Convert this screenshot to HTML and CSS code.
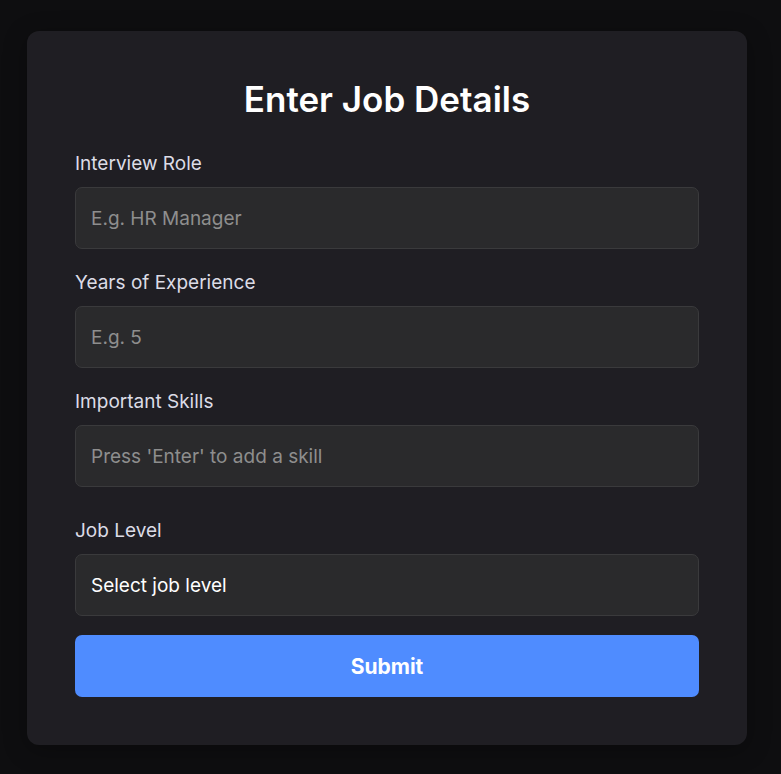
FILE: index.html
```html
<!DOCTYPE html>
<html lang="en">
<head>
<meta charset="utf-8">
<meta name="viewport" content="width=device-width, initial-scale=1">
<title>Enter Job Details</title>
<link rel="stylesheet" href="styles.css">
</head>
<body>
<main class="page">
  <form class="card">
    <h1 class="title">Enter Job Details</h1>
    <div class="field">
      <label for="role">Interview Role</label>
      <input class="control" id="role" type="text" placeholder="E.g. HR Manager">
    </div>
    <div class="field">
      <label for="years">Years of Experience</label>
      <input class="control" id="years" type="text" inputmode="numeric" placeholder="E.g. 5">
    </div>
    <div class="field field-skills">
      <label for="skills">Important Skills</label>
      <input class="control" id="skills" type="text" placeholder="Press 'Enter' to add a skill">
    </div>
    <div class="field">
      <label for="level">Job Level</label>
      <select class="control" id="level">
        <option value="">Select job level</option>
        <option>Junior</option>
        <option>Senior</option>
      </select>
    </div>
    <button class="submit" type="submit">Submit</button>
  </form>
</main>
</body>
</html>
```

FILE: styles.css
```css
* {
  box-sizing: border-box;
}

body {
  margin: 0;
  min-height: 100vh;
  background: #0e0e10;
  color: #fff;
  font-family: Inter, sans-serif;
}

.page {
  padding: 31px 34px 29px 27px;
}

.card {
  max-width: 720px;
  margin: 0 auto;
  padding: 48px;
  border-radius: 12px;
  background: #1f1e23;
  box-shadow: 0 5px 24px rgba(0, 0, 0, 0.3);
}

.title {
  margin: 0 0 30px;
  font-size: 35px;
  font-weight: 600;
  line-height: 40px;
  text-align: center;
}

.field {
  margin-bottom: 19px;
}

.field-skills {
  margin-bottom: 29px;
}

label {
  display: block;
  margin-bottom: 8px;
  color: #dcdce6;
  font-size: 19px;
  line-height: 30px;
}

.control {
  display: block;
  width: 100%;
  height: 62px;
  padding: 0 15px;
  border: 1px solid #3a3a3c;
  border-radius: 7px;
  outline: none;
  appearance: none;
  background: #2a2a2c;
  color: #fff;
  font: 400 19px Inter, sans-serif;
}

.control::placeholder {
  color: #8e8e8e;
  opacity: 1;
}

.submit {
  display: block;
  width: 100%;
  height: 62px;
  border: 0;
  border-radius: 7px;
  background: #4f8cff;
  color: #fff;
  font: 700 21px Inter, sans-serif;
  cursor: pointer;
}
```
